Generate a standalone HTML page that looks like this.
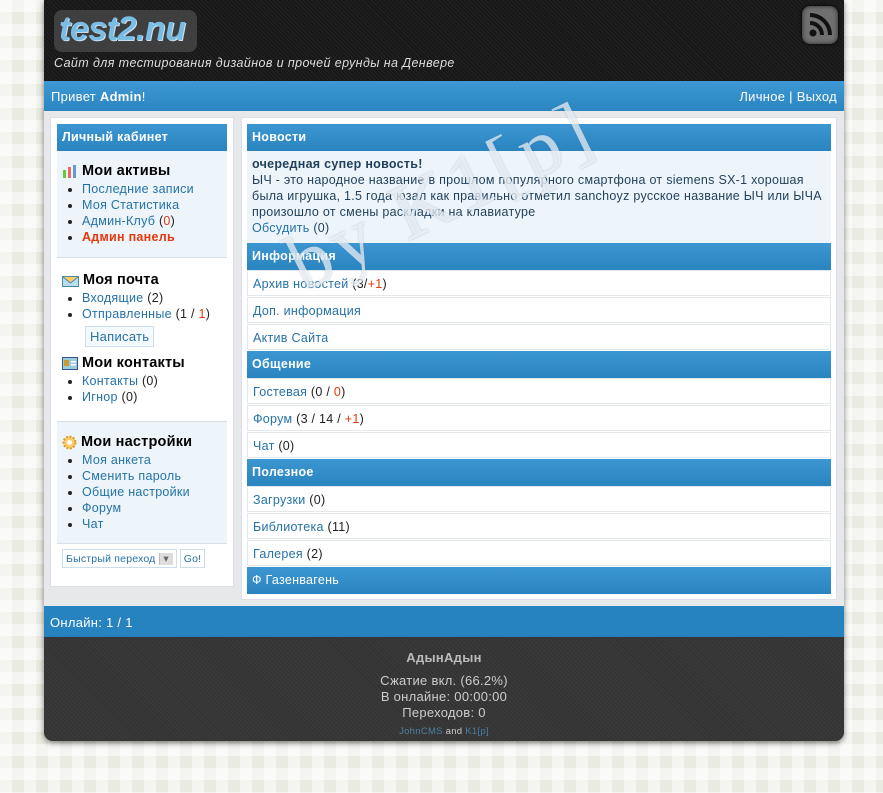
<!DOCTYPE html>
<html><head><meta charset="utf-8">
<style>
*{margin:0;padding:0;box-sizing:border-box}
body{width:883px;height:793px;overflow:hidden;font-family:"Liberation Sans",Arial,sans-serif;font-size:12.5px;letter-spacing:.28px;color:#222;
background-color:#e9eae2;
background-image:linear-gradient(90deg,rgba(255,255,255,.5) 50%,transparent 50%),linear-gradient(rgba(255,255,255,.5) 50%,transparent 50%);
background-size:24px 24px;position:relative}
a{color:#2572a8;text-decoration:none}
.r{color:#e4380c}
#wrap{position:absolute;left:44px;top:0;width:800px;height:741px;box-shadow:0 2px 6px rgba(0,0,0,.5);border-radius:0 0 9px 9px;overflow:hidden}
#head{height:81px;background:#1c1c1c;background-image:repeating-linear-gradient(45deg,#222 0 1px,#181818 1px 3px);position:relative}
#logo{position:absolute;left:10px;top:10px;width:143px;height:42px;background:#3f3f3f;border-radius:8px;font:italic bold 34px "Liberation Sans",sans-serif;color:#79bce4;padding:0 0 0 5px;text-shadow:1px 1px 0 #cde;letter-spacing:-.5px}
#slogan{position:absolute;left:10px;top:56px;font:italic 12.5px "Liberation Sans",sans-serif;letter-spacing:.4px;color:#ddd}
#rss{position:absolute;left:758px;top:6px;width:36px;height:38px;background:#707070;border-radius:8px;box-shadow:inset 0 0 4px #222,0 0 3px #000}
#bar{height:30px;background:linear-gradient(#3d98d4,#2a85c1);color:#fff;padding:8px 7px;font-size:13px}
#main{height:495px;background:#e6e8ea;position:relative}
.pan{position:absolute;background:#fff;border:1px solid #dde}
.hd{background:linear-gradient(#3b96d2,#2a84c0);color:#fff;font-weight:bold;font-size:12.5px;padding:6px 5px;height:27px}
.sec{padding:8px 5px;border-bottom:1px solid #d8e0e6}
.lb{background:#edf5fa}
.sec h3{font-size:14.5px;font-weight:bold;color:#000;margin:4px 0 2px;display:flex;align-items:center;letter-spacing:.2px}
.sec h3 svg{margin-right:4px}
.sec ul{margin-left:20px;list-style:disc;line-height:16px}
.row{height:26px;margin-bottom:1px;border:1px solid #e3e8ec;padding:6px 5px;background:#fff}
#online{height:31px;background:#2783bf;color:#fff;padding:9px 6px;font-size:13px}
#foot{height:104px;background:#383838;background-image:repeating-linear-gradient(45deg,#3c3c3c 0 1px,#343434 1px 3px);text-align:center;color:#ccc;padding-top:13px;font-size:13px;line-height:16px}
#wm{position:absolute;left:308px;top:220px;height:80px;line-height:80px;font:80px "Liberation Serif",serif;color:rgba(255,255,255,.65);transform:rotate(-26deg);transform-origin:left bottom;text-shadow:0 0 2px rgba(80,120,160,.4);white-space:nowrap;letter-spacing:5px}
</style></head><body>
<div id="wrap">
<div id="head">
<div id="logo">test2.nu</div>
<div id="slogan">Сайт для тестирования дизайнов и прочей ерунды на Денвере</div>
<div id="rss"><svg width="36" height="38" viewBox="0 0 36 38"><circle cx="11" cy="27" r="3.5" fill="#111"/><path d="M8 17a12 12 0 0 1 12 12" stroke="#111" stroke-width="4" fill="none"/><path d="M8 9a20 20 0 0 1 20 20" stroke="#111" stroke-width="4" fill="none"/></svg></div>
</div>
<div id="bar"><span>Привет <b>Admin</b>!</span><span style="float:right">Личное | Выход</span></div>
<div id="main">
<div class="pan" style="left:6px;top:6px;width:184px;height:470px;padding:6px">
 <div class="hd">Личный кабинет</div>
 <div class="sec lb" style="height:107px">
  <h3><svg width="16" height="13"><rect x="1" y="5" width="3" height="8" fill="#6c3"/><rect x="6" y="2" width="3" height="11" fill="#e66"/><rect x="11" y="0" width="3" height="13" fill="#69c"/></svg>Мои активы</h3>
  <ul><li><a>Последние записи</a></li><li><a>Моя Статистика</a></li><li><a>Админ-Клуб</a> (<span class="r">0</span>)</li><li><a style="color:#e4380c;font-weight:bold">Админ панель</a></li></ul>
 </div>
 <div class="sec" style="height:162px;margin-top:2px">
  <h3><svg width="17" height="14"><rect x="0.5" y="3.5" width="16" height="10" fill="#bde" stroke="#48a"/><path d="M1 4l7.5 6 7.5-6" fill="#fc6" stroke="#48a"/></svg>Моя почта</h3>
  <ul><li><a>Входящие</a> (2)</li><li><a>Отправленные</a> (1 / <span class="r">1</span>)</li></ul>
  <div style="margin:4px 0 0 23px;display:inline-block;border:1px solid #cde;background:#f4f9fc;padding:2px 4px;font-size:13px;color:#2572a8">Написать</div>
  <h3 style="margin-top:8px"><svg width="16" height="14"><rect x="0.5" y="1.5" width="15" height="12" fill="#9cd" stroke="#358"/><rect x="2" y="4" width="5" height="6" fill="#c93"/><rect x="9" y="5" width="5" height="1.5" fill="#fff"/><rect x="9" y="8" width="5" height="1.5" fill="#fff"/></svg>Мои контакты</h3>
  <ul><li><a>Контакты</a> (0)</li><li><a>Игнор</a> (0)</li></ul>
 </div>
 <div class="sec lb" style="height:122px">
  <h3><svg width="15" height="15"><circle cx="7.5" cy="7.5" r="6" fill="#fc6" stroke="#d93" stroke-width="2" stroke-dasharray="2 1.5"/><circle cx="7.5" cy="7.5" r="2.5" fill="#fff"/></svg>Мои настройки</h3>
  <ul><li><a>Моя анкета</a></li><li><a>Сменить пароль</a></li><li><a>Общие настройки</a></li><li><a>Форум</a></li><li><a>Чат</a></li></ul>
 </div>
 <div style="padding:5px 0 0 5px;font-size:10.5px;color:#2572a8;letter-spacing:.2px">
  <span style="display:inline-block;border:1px solid #cde;padding:3px 3px;height:19px">Быстрый переход <span style="display:inline-block;width:14px;border-left:1px solid #bbb;background:#ddd;text-align:center;color:#666">▾</span></span>
  <span style="display:inline-block;border:1px solid #cde;padding:3px 3px;height:19px">Go!</span>
 </div>
</div>
<div class="pan" style="left:197px;top:6px;width:596px;height:483px;padding:6px 5px">
 <div class="hd">Новости</div>
 <div style="background:#edf5fa;padding:5px 5px;height:92px;line-height:16px;color:#1f3f5c">
  <b>очередная супер новость!</b><br>ЫЧ - это народное название в прошлом популярного смартфона от siemens SX-1 хорошая была игрушка, 1.5 года юзал как правильно отметил sanchoyz русское название ЫЧ или ЫЧА произошло от смены раскладки на клавиатуре<br><a>Обсудить</a> (0)
 </div>
 <div class="hd">Информация</div>
 <div class="row"><a>Архив новостей</a> (3/<span class="r">+1</span>)</div>
 <div class="row"><a>Доп. информация</a></div>
 <div class="row"><a>Актив Сайта</a></div>
 <div class="hd">Общение</div>
 <div class="row"><a>Гостевая</a> (0 / <span class="r">0</span>)</div>
 <div class="row"><a>Форум</a> (3 / 14 / <span class="r">+1</span>)</div>
 <div class="row"><a>Чат</a> (0)</div>
 <div class="hd">Полезное</div>
 <div class="row"><a>Загрузки</a> (0)</div>
 <div class="row"><a>Библиотека</a> (11)</div>
 <div class="row"><a>Галерея</a> (2)</div>
 <div class="hd" style="font-weight:normal">Ф Газенвагень</div>
</div>
</div>
<div id="online">Онлайн: 1 / 1</div>
<div id="foot">
<div style="font-weight:bold;color:#bbb;margin-bottom:7px">АдынАдын</div>
<div>Сжатие вкл. (66.2%)</div><div>В онлайне: 00:00:00</div><div>Переходов: 0</div>
<div style="font-size:9.5px;margin-top:3px"><a style="color:#4a7fa0">JohnCMS</a> and <a style="color:#4a7fa0">K1[p]</a></div>
</div>
</div>
<div id="wm">by K1[p]</div>
</body></html>
